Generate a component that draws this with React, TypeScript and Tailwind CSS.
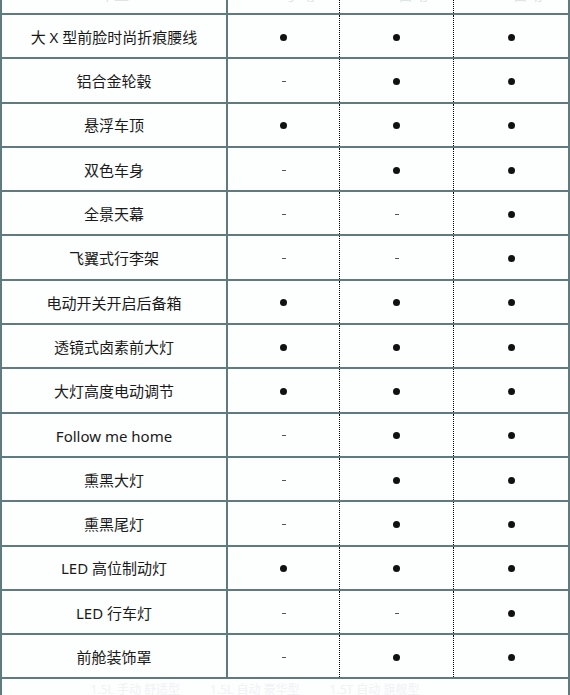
import React from "react";

type Mark = "d" | "-";
const rows: [string, Mark, Mark, Mark][] = [
  ["大 X 型前脸时尚折痕腰线", "d", "d", "d"],
  ["铝合金轮毂", "-", "d", "d"],
  ["悬浮车顶", "d", "d", "d"],
  ["双色车身", "-", "d", "d"],
  ["全景天幕", "-", "-", "d"],
  ["飞翼式行李架", "-", "-", "d"],
  ["电动开关开启后备箱", "d", "d", "d"],
  ["透镜式卤素前大灯", "d", "d", "d"],
  ["大灯高度电动调节", "d", "d", "d"],
  ["Follow me home", "-", "d", "d"],
  ["熏黑大灯", "-", "d", "d"],
  ["熏黑尾灯", "-", "d", "d"],
  ["LED 高位制动灯", "d", "d", "d"],
  ["LED 行车灯", "-", "-", "d"],
  ["前舱装饰罩", "-", "d", "d"],
];

function Cell({ m }: { m: Mark }) {
  return m === "d" ? (
    <span className="block w-[7px] h-[7px] rounded-full bg-[#111]" />
  ) : (
    <span className="block w-[4px] h-[1px] bg-[#555]" />
  );
}

export default function App() {
  const grid = "grid grid-cols-[226px_112px_114px_1fr]";
  return (
    <div
      className="w-[570px] h-[695px] overflow-hidden bg-[#fdfefe] text-[#1a1a1a] border-x-2 border-[#5f7b80]"
      style={{ fontFamily: '"Noto Sans", "Noto Sans CJK SC", sans-serif' }}
    >
      {/* clipped header row */}
      <div className={`${grid} h-[15px] border-b-2 border-[#5f7b80] overflow-hidden text-[15px] leading-[20px] text-[#dfe5e5]`}>
        <div className="border-r-2 border-[#5f7b80] flex justify-center overflow-hidden">
          <span className="-mt-[16px]">车型</span>
        </div>
        <div className="border-r border-dotted border-black flex justify-center overflow-hidden">
          <span className="-mt-[16px]">1.5L 手动</span>
        </div>
        <div className="border-r border-dotted border-black flex justify-center overflow-hidden">
          <span className="-mt-[16px]">1.5L 自动</span>
        </div>
        <div className="flex justify-center overflow-hidden">
          <span className="-mt-[16px]">1.5T 自动</span>
        </div>
      </div>
      {rows.map(([name, a, b, c]) => (
        <div key={name} className={`${grid} h-[44.3px] border-b-2 border-[#5f7b80] text-[15px]`}>
          <div className="border-r-2 border-[#5f7b80] flex items-center justify-center pt-[2px]">{name}</div>
          <div className="border-r border-dotted border-black flex items-center justify-center pt-[2px]">
            <Cell m={a} />
          </div>
          <div className="border-r border-dotted border-black flex items-center justify-center pt-[2px]">
            <Cell m={b} />
          </div>
          <div className="flex items-center justify-center pt-[2px]">
            <Cell m={c} />
          </div>
        </div>
      ))}
      <div className="flex gap-[30px] justify-center pt-[4px] text-[12px] leading-[14px] text-[#eef3f4] pr-[60px]">
        <span>1.5L 手动 舒适型</span>
        <span>1.5L 自动 豪华型</span>
        <span>1.5T 自动 旗舰型</span>
      </div>
    </div>
  );
}
